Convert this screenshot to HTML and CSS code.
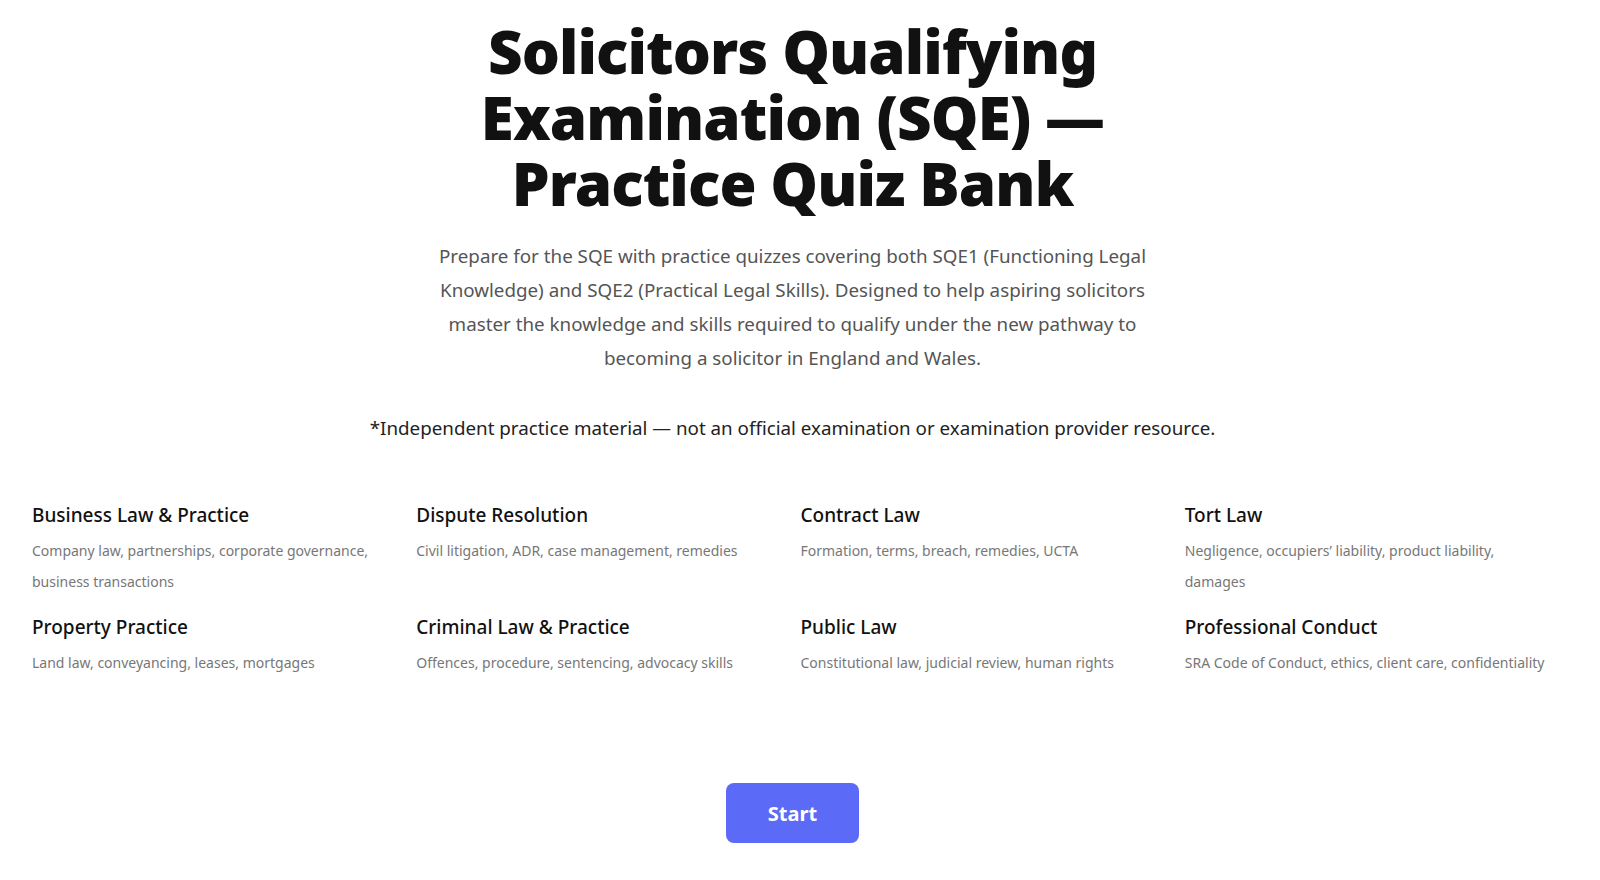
FILE: index.html
```html
<!DOCTYPE html>
<html lang="en">
<head>
  <meta charset="UTF-8">
  <title>SQE Practice Quiz Bank</title>
  <link rel="stylesheet" href="styles.css">
</head>
<body>
  <main class="page">
    <h1 class="title">Solicitors Qualifying Examination (SQE) — Practice Quiz Bank</h1>

    <p class="intro">Prepare for the SQE with practice quizzes covering both SQE1 (Functioning Legal Knowledge) and SQE2 (Practical Legal Skills). Designed to help aspiring solicitors master the knowledge and skills required to qualify under the new pathway to becoming a solicitor in England and Wales.</p>

    <p class="note">*Independent practice material — not an official examination or examination provider resource.</p>

    <div class="topics">
      <div class="topic">
        <h3>Business Law &amp; Practice</h3>
        <p>Company law, partnerships, corporate governance, business transactions</p>
      </div>
      <div class="topic">
        <h3>Dispute Resolution</h3>
        <p>Civil litigation, ADR, case management, remedies</p>
      </div>
      <div class="topic">
        <h3>Contract Law</h3>
        <p>Formation, terms, breach, remedies, UCTA</p>
      </div>
      <div class="topic">
        <h3>Tort Law</h3>
        <p>Negligence, occupiers’ liability, product liability, damages</p>
      </div>
      <div class="topic">
        <h3>Property Practice</h3>
        <p>Land law, conveyancing, leases, mortgages</p>
      </div>
      <div class="topic">
        <h3>Criminal Law &amp; Practice</h3>
        <p>Offences, procedure, sentencing, advocacy skills</p>
      </div>
      <div class="topic">
        <h3>Public Law</h3>
        <p>Constitutional law, judicial review, human rights</p>
      </div>
      <div class="topic">
        <h3>Professional Conduct</h3>
        <p>SRA Code of Conduct, ethics, client care, confidentiality</p>
      </div>
    </div>

    <div class="actions">
      <button class="start-btn">Start</button>
    </div>
  </main>
</body>
</html>
```

FILE: styles.css
```css
* {
  box-sizing: border-box;
}

body {
  margin: 0;
  font-family: "Noto Sans", "Open Sans", sans-serif;
  background: #fff;
  color: #111;
}

.page {
  width: 1585px;
  padding: 18px 0 0;
  text-align: center;
}

.title {
  margin: 0 auto;
  width: 700px;
  font-family: "Noto Sans", Lato, sans-serif;
  font-weight: 900;
  font-size: 60px;
  line-height: 66px;
  letter-spacing: -0.9px;
  color: #111;
}

.intro {
  margin: 23px auto 0;
  width: 720px;
  font-size: 18.8px;
  line-height: 34px;
  color: #555;
}

.note {
  margin: 38px 0 0;
  font-size: 18.8px;
  line-height: 30px;
  color: #222;
}

.topics {
  display: grid;
  grid-template-columns: repeat(4, 1fr);
  column-gap: 16px;
  row-gap: 15px;
  padding: 0 32px;
  margin-top: 57px;
  text-align: left;
}

.topic h3 {
  margin: 0;
  font-size: 19px;
  font-weight: 500;
  line-height: 30px;
  color: #111;
}

.topic p {
  margin: 5px 0 0;
  font-size: 14px;
  line-height: 31px;
  color: #777;
}

.actions {
  margin-top: 105px;
}

.start-btn {
  width: 133px;
  height: 60px;
  border: none;
  border-radius: 8px;
  background: #5b6af7;
  color: #fff;
  font-family: "Noto Sans", sans-serif;
  font-weight: 700;
  font-size: 20px;
  cursor: pointer;
}
```
